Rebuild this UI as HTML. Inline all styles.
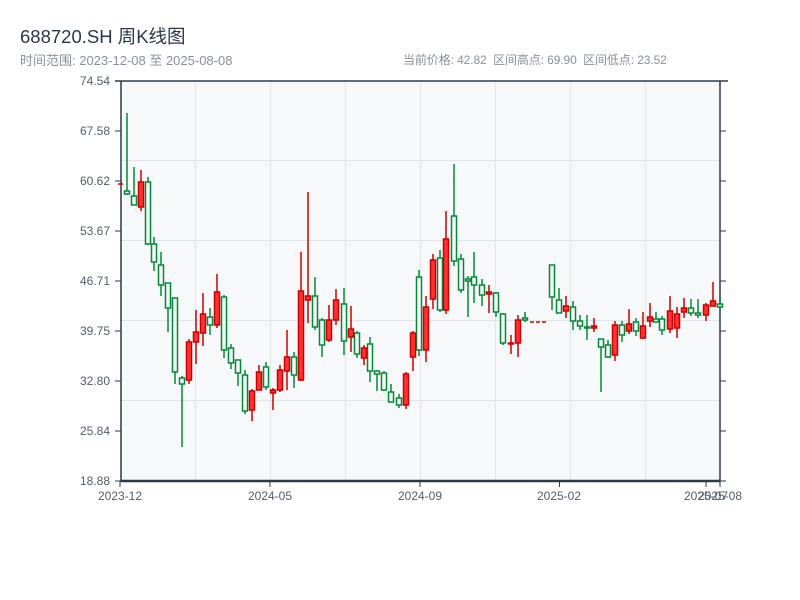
<!DOCTYPE html>
<html><head><meta charset="utf-8"><style>
body{margin:0;background:#fff;width:800px;height:600px;overflow:hidden;font-family:"Liberation Sans","Noto Sans CJK SC",sans-serif;}
.t{position:absolute;left:20px;top:23px;font-size:18.5px;color:#2d3748;}
.s{position:absolute;top:51px;font-size:12px;color:#8a9099;}
</style></head><body>
<div class="t">688720.SH 周K线图</div>
<div class="s" style="left:20px;font-size:13px;top:50px">时间范围: 2023-12-08 至 2025-08-08</div>
<div class="s" style="left:403px;letter-spacing:-0.1px">当前价格: 42.82&nbsp; 区间高点: 69.90&nbsp; 区间低点: 23.52</div>
<svg width="800" height="600" style="position:absolute;left:0;top:0" font-family="Liberation Sans, sans-serif">
<rect x="121" y="81" width="599" height="400" fill="#f7f8fa"/>
<g stroke="#e1e4e9" stroke-width="1">
<line x1="195.5" y1="81" x2="195.5" y2="481"/><line x1="270.5" y1="81" x2="270.5" y2="481"/><line x1="345.5" y1="81" x2="345.5" y2="481"/><line x1="420.5" y1="81" x2="420.5" y2="481"/><line x1="495.5" y1="81" x2="495.5" y2="481"/><line x1="570.5" y1="81" x2="570.5" y2="481"/><line x1="645.5" y1="81" x2="645.5" y2="481"/>
<line x1="121" y1="160.5" x2="720" y2="160.5"/><line x1="121" y1="240.5" x2="720" y2="240.5"/><line x1="121" y1="320.5" x2="720" y2="320.5"/><line x1="121" y1="400.5" x2="720" y2="400.5"/>
</g>
<g stroke="#2d3a4a" stroke-width="1.5" fill="none">
<line x1="115" y1="81" x2="728" y2="81"/>
<line x1="121" y1="81" x2="121" y2="482"/>
<line x1="720" y1="81" x2="720" y2="482"/>
<line x1="121" y1="481" x2="720" y2="481" stroke-width="2.5"/>
<path d="M115 81h6M115 131h6M115 181h6M115 231h6M115 281h6M115 331h6M115 381h6M115 431h6M115 481h6M720 131h6M720 181h6M720 231h6M720 281h6M720 331h6M720 381h6M720 431h6M720 481h6M120 481v6M270 481v6M420 481v6M559.5 481v6M706 481v6M720 481v6" stroke-width="1"/>
</g>
<g font-size="12" fill="#555d68" text-anchor="end">
<text x="110" y="85">74.54</text><text x="110" y="135">67.58</text><text x="110" y="185">60.62</text><text x="110" y="235">53.67</text><text x="110" y="285">46.71</text><text x="110" y="335">39.75</text><text x="110" y="385">32.80</text><text x="110" y="435">25.84</text><text x="110" y="485">18.88</text>
</g>
<g font-size="12" fill="#555d68" text-anchor="middle">
<text x="120" y="500">2023-12</text><text x="270" y="500">2024-05</text><text x="420" y="500">2024-09</text><text x="559" y="500">2025-02</text><text x="706" y="500">2025-07</text><text x="720" y="500">2025-08</text>
</g>
<g stroke="#cc0000" stroke-width="1.5"><line x1="118" y1="184" x2="123" y2="184"/>
<line x1="530" y1="322" x2="534" y2="322"/><line x1="536" y1="322" x2="540" y2="322"/><line x1="542" y1="322" x2="546" y2="322"/></g>
<g stroke="#008a35" stroke-width="1.5" fill="#f7f8fa">
<line x1="127" y1="113" x2="127" y2="195"/><rect x="124.5" y="191" width="5" height="3"/>
<line x1="134" y1="167" x2="134" y2="205"/><rect x="131.5" y="196" width="5" height="9"/>
<line x1="148" y1="177" x2="148" y2="245"/><rect x="145.5" y="182" width="5" height="62"/>
<line x1="154" y1="237" x2="154" y2="271"/><rect x="151.5" y="244" width="5" height="18"/>
<line x1="161" y1="252" x2="161" y2="296"/><rect x="158.5" y="265" width="5" height="20"/>
<line x1="168" y1="283" x2="168" y2="332"/><rect x="165.5" y="283" width="5" height="25"/>
<line x1="175" y1="298" x2="175" y2="384"/><rect x="172.5" y="298" width="5" height="74"/>
<line x1="182" y1="376" x2="182" y2="447"/><rect x="179.5" y="378" width="5" height="6"/>
<line x1="210" y1="308" x2="210" y2="335"/><rect x="207.5" y="317" width="5" height="8"/>
<line x1="224" y1="295" x2="224" y2="358"/><rect x="221.5" y="297" width="5" height="53"/>
<line x1="231" y1="344" x2="231" y2="369"/><rect x="228.5" y="348" width="5" height="15"/>
<line x1="238" y1="360" x2="238" y2="386"/><rect x="235.5" y="360" width="5" height="13"/>
<line x1="245" y1="370" x2="245" y2="414"/><rect x="242.5" y="375" width="5" height="36"/>
<line x1="266" y1="362" x2="266" y2="390"/><rect x="263.5" y="367" width="5" height="20"/>
<line x1="294" y1="352" x2="294" y2="388"/><rect x="291.5" y="357" width="5" height="18"/>
<line x1="315" y1="277" x2="315" y2="330"/><rect x="312.5" y="296" width="5" height="31"/>
<line x1="322" y1="318" x2="322" y2="357"/><rect x="319.5" y="320" width="5" height="25"/>
<line x1="344" y1="288" x2="344" y2="355"/><rect x="341.5" y="304" width="5" height="37"/>
<line x1="357" y1="331" x2="357" y2="358"/><rect x="354.5" y="333" width="5" height="21"/>
<line x1="370" y1="337" x2="370" y2="382"/><rect x="367.5" y="344" width="5" height="27"/>
<line x1="377" y1="370" x2="377" y2="391"/><rect x="374.5" y="371" width="5" height="3"/>
<line x1="384" y1="371" x2="384" y2="391"/><rect x="381.5" y="373" width="5" height="17"/>
<line x1="391" y1="384" x2="391" y2="402"/><rect x="388.5" y="392" width="5" height="10"/>
<line x1="399" y1="394" x2="399" y2="408"/><rect x="396.5" y="398" width="5" height="7"/>
<line x1="419" y1="270" x2="419" y2="356"/><rect x="416.5" y="277" width="5" height="73"/>
<line x1="440" y1="250" x2="440" y2="312"/><rect x="437.5" y="258" width="5" height="52"/>
<line x1="454" y1="164" x2="454" y2="266"/><rect x="451.5" y="216" width="5" height="45"/>
<line x1="461" y1="254" x2="461" y2="293"/><rect x="458.5" y="259" width="5" height="31"/>
<line x1="468" y1="276" x2="468" y2="317"/><rect x="465.5" y="279" width="5" height="2"/>
<line x1="474" y1="252" x2="474" y2="303"/><rect x="471.5" y="277" width="5" height="8"/>
<line x1="482" y1="279" x2="482" y2="306"/><rect x="479.5" y="285" width="5" height="10"/>
<line x1="496" y1="292" x2="496" y2="317"/><rect x="493.5" y="293" width="5" height="19"/>
<line x1="503" y1="313" x2="503" y2="345"/><rect x="500.5" y="314" width="5" height="29"/>
<line x1="525" y1="312" x2="525" y2="322"/><rect x="522.5" y="318" width="5" height="2"/>
<line x1="552" y1="265" x2="552" y2="310"/><rect x="549.5" y="265" width="5" height="32"/>
<line x1="559" y1="288" x2="559" y2="313"/><rect x="556.5" y="300" width="5" height="13"/>
<line x1="573" y1="301" x2="573" y2="330"/><rect x="570.5" y="307" width="5" height="14"/>
<line x1="580" y1="315" x2="580" y2="330"/><rect x="577.5" y="321" width="5" height="5"/>
<line x1="587" y1="315" x2="587" y2="340"/><rect x="584.5" y="327" width="5" height="1"/>
<line x1="601" y1="339" x2="601" y2="392"/><rect x="598.5" y="339" width="5" height="8"/>
<line x1="608" y1="340" x2="608" y2="358"/><rect x="605.5" y="345" width="5" height="12"/>
<line x1="622" y1="321" x2="622" y2="342"/><rect x="619.5" y="325" width="5" height="10"/>
<line x1="636" y1="318" x2="636" y2="336"/><rect x="633.5" y="322" width="5" height="9"/>
<line x1="656" y1="312" x2="656" y2="322"/><rect x="653.5" y="319" width="5" height="3"/>
<line x1="662" y1="316" x2="662" y2="335"/><rect x="659.5" y="319" width="5" height="11"/>
<line x1="691" y1="299" x2="691" y2="316"/><rect x="688.5" y="308" width="5" height="5"/>
<line x1="698" y1="299" x2="698" y2="318"/><rect x="695.5" y="313" width="5" height="2"/>
<line x1="720" y1="295" x2="720" y2="310"/><rect x="717.5" y="304" width="5" height="3"/>
</g>
<g stroke="#cc0000" stroke-width="1.5" fill="#ff3333">
<line x1="141" y1="170" x2="141" y2="211"/><rect x="138.5" y="182" width="5" height="25"/>
<line x1="189" y1="339" x2="189" y2="384"/><rect x="186.5" y="342" width="5" height="38"/>
<line x1="196" y1="310" x2="196" y2="364"/><rect x="193.5" y="332" width="5" height="10"/>
<line x1="203" y1="293" x2="203" y2="346"/><rect x="200.5" y="314" width="5" height="19"/>
<line x1="217" y1="274" x2="217" y2="328"/><rect x="214.5" y="292" width="5" height="33"/>
<line x1="252" y1="389" x2="252" y2="421"/><rect x="249.5" y="391" width="5" height="19"/>
<line x1="259" y1="365" x2="259" y2="390"/><rect x="256.5" y="372" width="5" height="18"/>
<line x1="273" y1="388" x2="273" y2="410"/><rect x="270.5" y="390" width="5" height="3"/>
<line x1="280" y1="365" x2="280" y2="392"/><rect x="277.5" y="370" width="5" height="20"/>
<line x1="287" y1="330" x2="287" y2="390"/><rect x="284.5" y="357" width="5" height="14"/>
<line x1="301" y1="252" x2="301" y2="381"/><rect x="298.5" y="291" width="5" height="89"/>
<line x1="308" y1="192" x2="308" y2="323"/><rect x="305.5" y="296" width="5" height="4"/>
<line x1="329" y1="305" x2="329" y2="342"/><rect x="326.5" y="320" width="5" height="20"/>
<line x1="336" y1="289" x2="336" y2="325"/><rect x="333.5" y="300" width="5" height="20"/>
<line x1="351" y1="306" x2="351" y2="352"/><rect x="348.5" y="329" width="5" height="8"/>
<line x1="364" y1="345" x2="364" y2="365"/><rect x="361.5" y="348" width="5" height="10"/>
<line x1="406" y1="372" x2="406" y2="409"/><rect x="403.5" y="374" width="5" height="31"/>
<line x1="413" y1="331" x2="413" y2="371"/><rect x="410.5" y="333" width="5" height="24"/>
<line x1="426" y1="296" x2="426" y2="362"/><rect x="423.5" y="307" width="5" height="43"/>
<line x1="433" y1="254" x2="433" y2="309"/><rect x="430.5" y="260" width="5" height="39"/>
<line x1="446" y1="211" x2="446" y2="314"/><rect x="443.5" y="239" width="5" height="71"/>
<line x1="489" y1="285" x2="489" y2="313"/><rect x="486.5" y="292" width="5" height="2"/>
<line x1="511" y1="335" x2="511" y2="354"/><rect x="508.5" y="343" width="5" height="1"/>
<line x1="518" y1="315" x2="518" y2="357"/><rect x="515.5" y="320" width="5" height="23"/>
<line x1="566" y1="296" x2="566" y2="318"/><rect x="563.5" y="306" width="5" height="5"/>
<line x1="594" y1="318" x2="594" y2="332"/><rect x="591.5" y="326" width="5" height="2"/>
<line x1="615" y1="321" x2="615" y2="361"/><rect x="612.5" y="325" width="5" height="30"/>
<line x1="629" y1="309" x2="629" y2="334"/><rect x="626.5" y="324" width="5" height="7"/>
<line x1="643" y1="312" x2="643" y2="339"/><rect x="640.5" y="326" width="5" height="12"/>
<line x1="650" y1="303" x2="650" y2="327"/><rect x="647.5" y="317" width="5" height="4"/>
<line x1="670" y1="296" x2="670" y2="333"/><rect x="667.5" y="311" width="5" height="18"/>
<line x1="677" y1="307" x2="677" y2="338"/><rect x="674.5" y="314" width="5" height="14"/>
<line x1="684" y1="298" x2="684" y2="318"/><rect x="681.5" y="308" width="5" height="4"/>
<line x1="706" y1="303" x2="706" y2="321"/><rect x="703.5" y="305" width="5" height="10"/>
<line x1="713" y1="282" x2="713" y2="306"/><rect x="710.5" y="301" width="5" height="5"/>
</g>
</svg>
</body></html>
